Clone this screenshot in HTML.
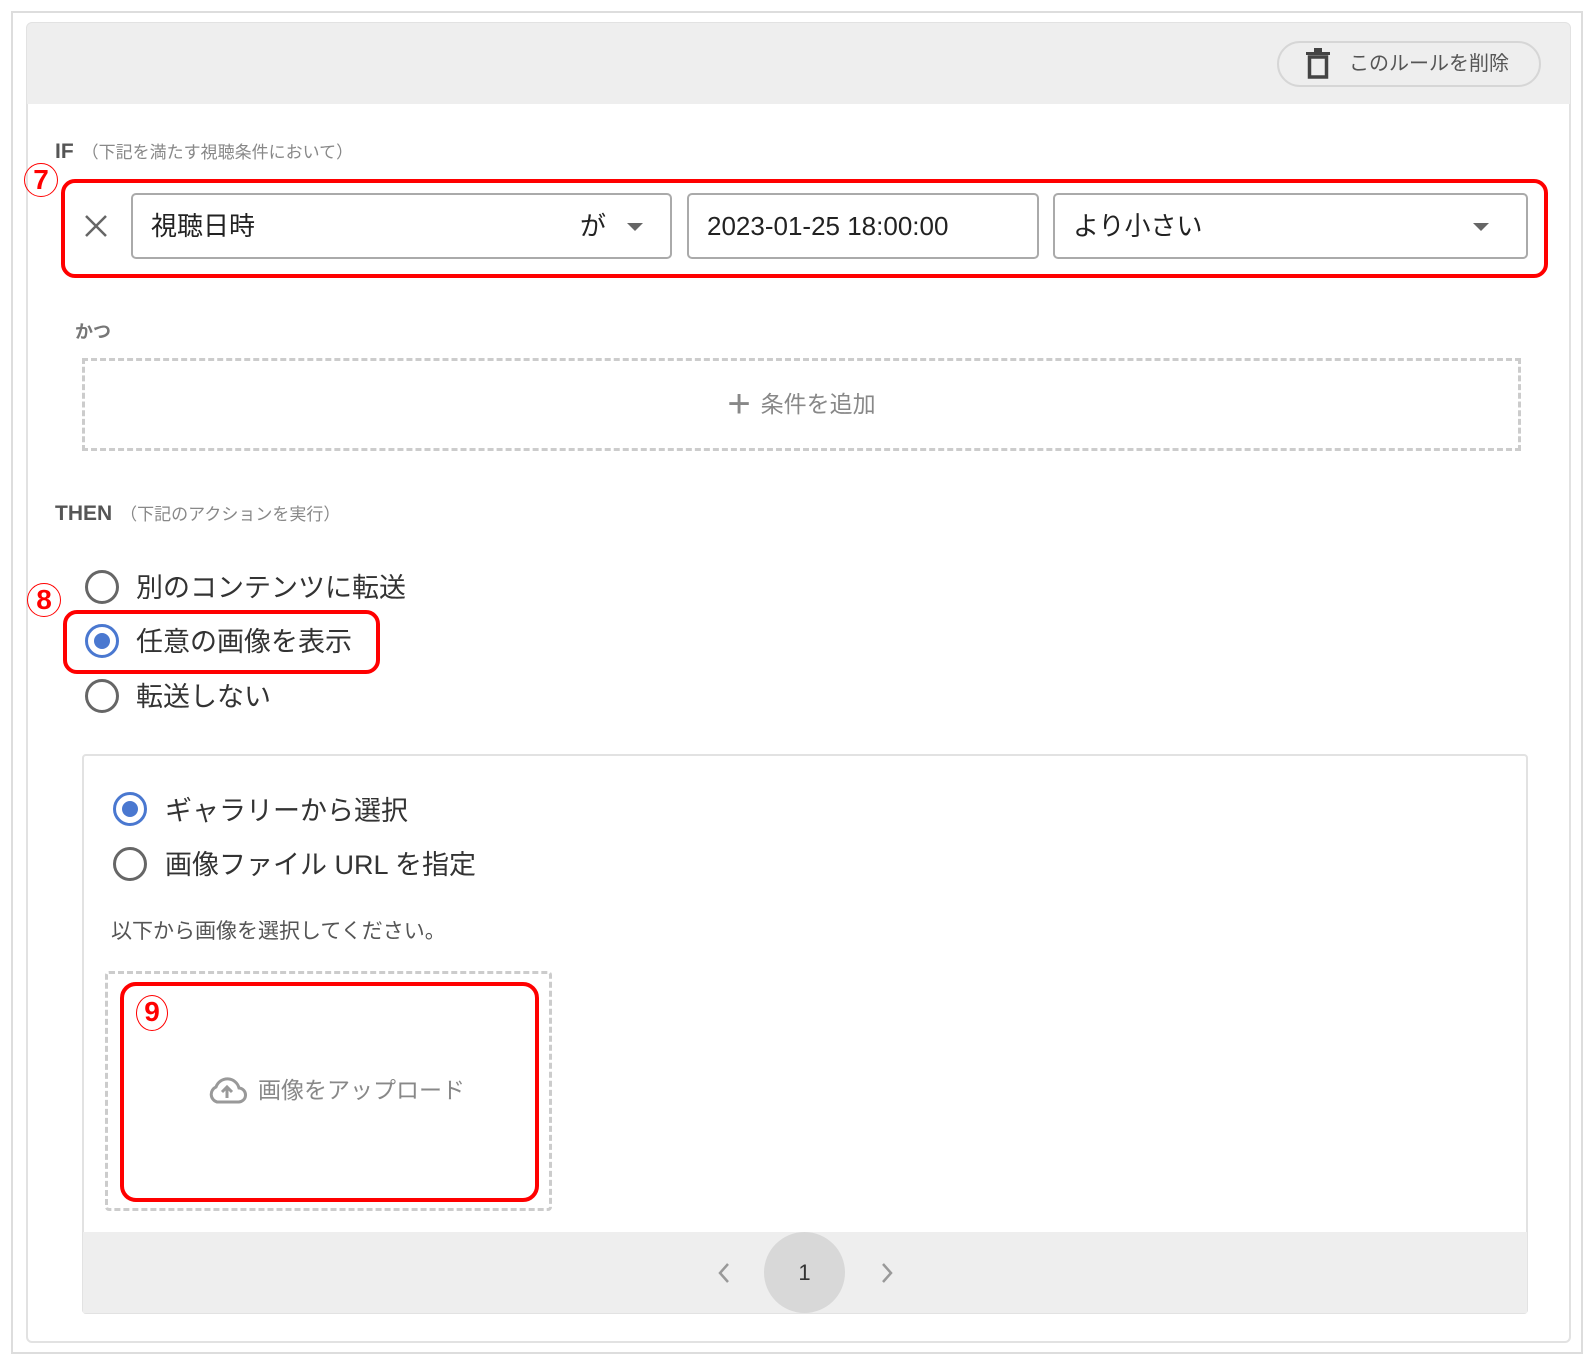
<!DOCTYPE html>
<html><head><meta charset="utf-8"><style>
*{box-sizing:border-box;margin:0;padding:0}
body{width:1594px;height:1360px;background:#fff;font-family:"Liberation Sans","Noto Sans CJK JP",sans-serif;position:relative;overflow:hidden;color:#333}
.a{position:absolute}
.outer{left:11px;top:11px;width:1572px;height:1343px;border:2px solid #ddd}
.card{left:26px;top:22px;width:1545px;height:1321px;border:2px solid #e2e2e2;border-radius:6px}
.head{left:27px;top:23px;width:1543px;height:81px;background:#eee;border-radius:5px 5px 0 0}
.del{left:1277px;top:41px;width:264px;height:46px;border:2px solid #d6d6d6;border-radius:23px;font-size:20px;color:#555;line-height:42px;padding-left:70px}
.lbl{font-size:21px;font-weight:bold;color:#555}
.lbl span{font-size:17px;font-weight:normal;color:#888;margin-left:8px}
.red{border:4px solid #f00;border-radius:14px}
.fld{border:2px solid #aaa;border-radius:5px;height:66px;font-size:26px;line-height:62px;padding-left:18px;color:#222}
.tri{position:absolute;width:0;height:0;border-left:8px solid transparent;border-right:8px solid transparent;border-top:8px solid #666;top:28px}
.num{color:#f00;font-weight:bold;font-size:28px;width:34px;height:34px;border:1.5px solid #f00;border-radius:50%;text-align:center;line-height:32px}
.radio{width:34px;height:34px;border:3px solid #666;border-radius:50%}
.radio.on{border-color:#4a78d0}
.radio.on::after{content:"";position:absolute;left:6px;top:6px;width:16px;height:16px;border-radius:50%;background:#4a78d0}
.rt{font-size:27px;color:#333}
</style></head><body>
<div class="a outer"></div>
<div class="a card"></div>
<div class="a head"></div>
<div class="a del">このルールを削除
<svg class="a" style="left:27px;top:5px" width="24" height="32" viewBox="0 0 24 32"><rect x="0" y="4" width="24" height="3" fill="#444"/><rect x="8" y="0" width="8" height="4" fill="#444"/><rect x="3.5" y="9" width="17" height="20" fill="none" stroke="#444" stroke-width="3.5"/></svg></div>

<div class="a lbl" style="left:55px;top:138px">IF<span>（下記を満たす視聴条件において）</span></div>
<div class="a num" style="left:24px;top:163px">7</div>
<div class="a red" style="left:61px;top:179px;width:1487px;height:99px"></div>
<svg class="a" style="left:84px;top:214px" width="24" height="24" viewBox="0 0 24 24"><path d="M2 2L22 22M22 2L2 22" stroke="#666" stroke-width="2.5"/></svg>
<div class="a fld" style="left:131px;top:193px;width:541px">視聴日時<span class="a" style="left:447px;top:0">が</span><div class="tri" style="left:494px"></div></div>
<div class="a fld" style="left:687px;top:193px;width:352px">2023-01-25 18:00:00</div>
<div class="a fld" style="left:1053px;top:193px;width:475px">より小さい<div class="tri" style="left:418px"></div></div>

<div class="a" style="left:75px;top:318px;font-size:18px;color:#777;font-weight:bold">かつ</div>
<div class="a" style="left:82px;top:358px;width:1439px;height:93px;border:3px dashed #ccc;font-size:23px;color:#888;text-align:center;line-height:86px">
<span style="font-size:40px;font-weight:300;vertical-align:-5px;margin-right:10px">+</span>条件を追加</div>

<div class="a lbl" style="left:55px;top:500px">THEN<span>（下記のアクションを実行）</span></div>
<div class="a num" style="left:27px;top:583px">8</div>
<div class="a red" style="left:63px;top:610px;width:317px;height:64px"></div>
<div class="a radio" style="left:85px;top:570px"></div><div class="a rt" style="left:136px;top:566px">別のコンテンツに転送</div>
<div class="a radio on" style="left:85px;top:624px"></div><div class="a rt" style="left:136px;top:620px">任意の画像を表示</div>
<div class="a radio" style="left:85px;top:679px"></div><div class="a rt" style="left:136px;top:675px">転送しない</div>

<div class="a" style="left:82px;top:754px;width:1446px;height:560px;border:2px solid #e2e2e2;border-radius:4px"></div>
<div class="a radio on" style="left:113px;top:792px"></div><div class="a rt" style="left:165px;top:789px">ギャラリーから選択</div>
<div class="a radio" style="left:113px;top:847px"></div><div class="a rt" style="left:165px;top:843px">画像ファイル URL を指定</div>
<div class="a" style="left:111px;top:915px;font-size:21px;color:#555">以下から画像を選択してください。</div>
<div class="a" style="left:105px;top:971px;width:447px;height:240px;border:3px dashed #ccc;border-radius:4px"></div>
<div class="a red" style="left:120px;top:982px;width:419px;height:220px;border-radius:16px"></div>
<div class="a num" style="left:136px;top:995px;width:32px;height:36px">9</div>
<svg class="a" style="left:207px;top:1075px" width="40" height="30" viewBox="0 0 40 30"><path d="M10 27H31A7 7 0 0 0 32 13A12 12 0 0 0 9 12A8 8 0 0 0 10 27Z" fill="none" stroke="#999" stroke-width="3"/><path d="M20 23V13M15 17L20 12L25 17" stroke="#999" stroke-width="3" fill="none"/></svg>
<div class="a" style="left:258px;top:1071px;font-size:23px;color:#888">画像をアップロード</div>

<div class="a" style="left:83px;top:1232px;width:1444px;height:81px;background:#eee"></div>
<div class="a" style="left:764px;top:1232px;width:81px;height:81px;border-radius:50%;background:#d8d8d8;text-align:center;line-height:81px;font-size:22px;color:#333">1</div>
<svg class="a" style="left:717px;top:1262px" width="14" height="22"><path d="M11 2L3 11L11 20" stroke="#999" stroke-width="2.5" fill="none"/></svg>
<svg class="a" style="left:880px;top:1262px" width="14" height="22"><path d="M3 2L11 11L3 20" stroke="#999" stroke-width="2.5" fill="none"/></svg>
</body></html>
